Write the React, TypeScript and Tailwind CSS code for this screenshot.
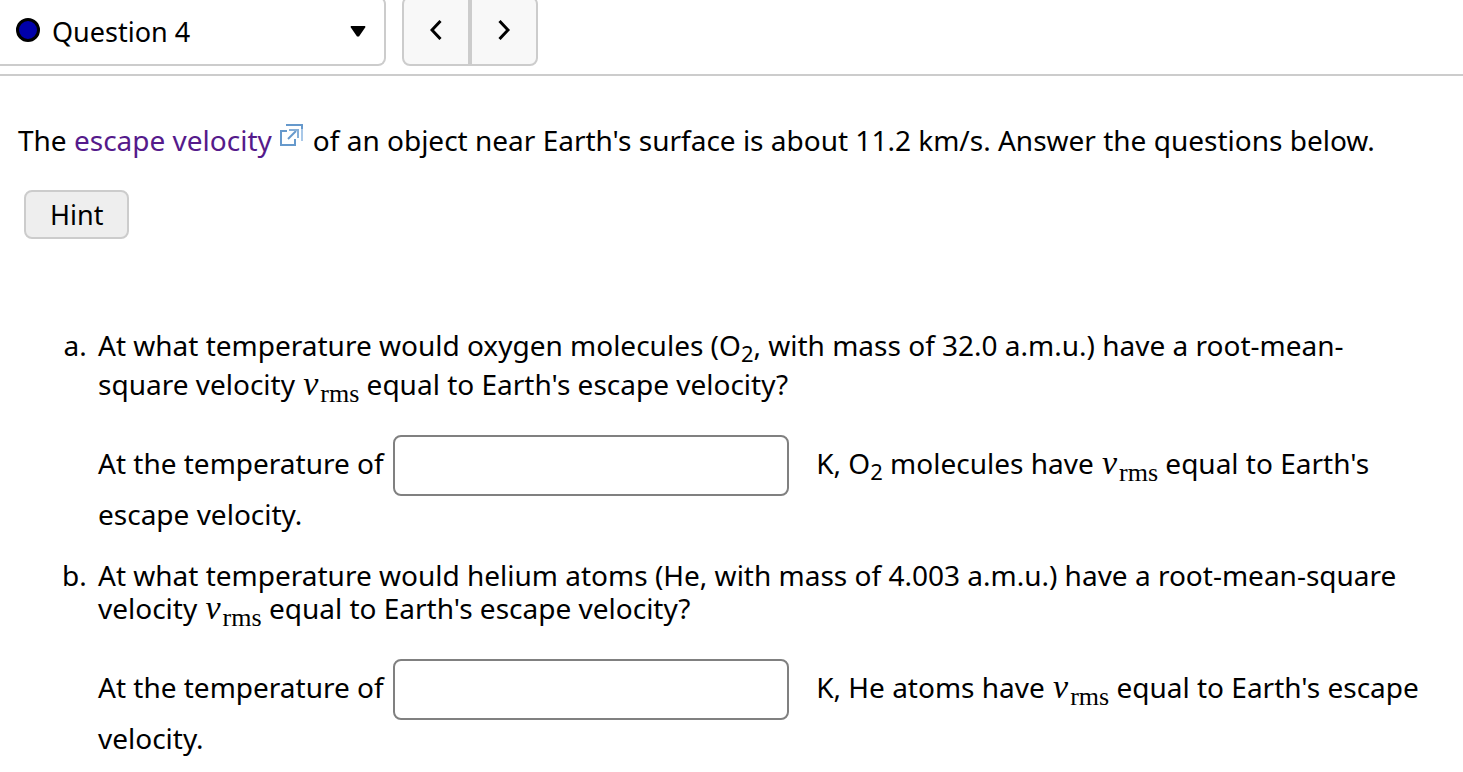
import React, { useId, useState } from 'react';

function Vrms() {
  return (
    <span className="whitespace-nowrap font-['Liberation_Serif',serif] leading-none">
      <i className="pr-0.5 pl-px text-[34px] leading-0">v</i>
      <sub className="text-[26px]">rms</sub>
    </span>
  );
}

function ExternalIcon() {
  return (
    <svg width="23" height="23" viewBox="0 0 23 23" fill="none" className="mr-[10px] mb-1 ml-2 inline-block align-baseline" aria-hidden="true">
      <path d="M22 3V17" stroke="#a9c8e8" strokeWidth="2" />
      <path d="M6 1H22V5" stroke="#6699cc" strokeWidth="2" />
      <path d="M7 7H1V21H15V15" stroke="#6699cc" strokeWidth="2" />
      <path d="M8 15L16 7" stroke="#6699cc" strokeWidth="2" />
      <path d="M9 6H18V14" stroke="#86afd8" strokeWidth="2" />
    </svg>
  );
}

interface AnswerProps {
  children: React.ReactNode;
  className: string;
}

function Answer({ children, className }: AnswerProps) {
  const id = useId();
  const [value, setValue] = useState('');

  return (
    <p className={className}>
      <label htmlFor={id}>At the temperature of</label>{' '}
      <input
        id={id}
        type="text"
        value={value}
        onChange={(e) => setValue(e.target.value)}
        className="mr-5 mb-[2px] ml-0.5 h-[61px] w-[396px] rounded-lg border-2 border-[#808080] bg-white px-3 align-middle"
      />{' '}
      {children}
    </p>
  );
}

export default function App() {
  const [question, setQuestion] = useState(4);

  return (
    <div className="overflow-hidden bg-white font-['Noto_Sans',sans-serif] text-[28px] leading-[33px] text-black">
      {/* Question navigation */}
      <header className="flex gap-4 border-b-2 border-[#cccccc] pb-2 text-[27px]">
        <div className="relative -mt-1 h-[70px] w-[386px]">
          <select
            aria-label="Question"
            value={question}
            onChange={(e) => setQuestion(Number(e.target.value))}
            className="h-full w-full appearance-none rounded-r-lg border-2 border-l-0 border-[#cccccc] bg-white pl-[52px]"
          >
            {[1, 2, 3, 4, 5, 6].map((n) => (
              <option key={n} value={n}>
                Question {n}
              </option>
            ))}
          </select>
          <span className="pointer-events-none absolute top-[22px] left-4 size-6 rounded-full border-[3px] border-black bg-[#0000aa]" />
          <svg width="16" height="11" viewBox="0 0 16 11" className="pointer-events-none absolute top-[30px] right-5" aria-hidden="true">
            <path d="M1 0H15L15.5 1L9 10.5H7L0.5 1Z" />
          </svg>
        </div>
        <nav className="-mt-1 flex h-[70px]">
          <button
            aria-label="Previous question"
            onClick={() => setQuestion(Math.max(1, question - 1))}
            className="flex w-[68px] items-center justify-center rounded-l-lg border-2 border-[#cccccc] bg-[#f8f8f8] pb-0.5"
          >
            <svg width="12" height="20" viewBox="0 0 12 20" fill="none" stroke="black" strokeWidth="3" aria-hidden="true">
              <path d="M10.5 1L2 10L10.5 19" />
            </svg>
          </button>
          <button
            aria-label="Next question"
            onClick={() => setQuestion(Math.min(6, question + 1))}
            className="flex w-[68px] items-center justify-center rounded-r-lg border-2 border-[#cccccc] bg-[#f8f8f8] pb-0.5"
          >
            <svg width="12" height="20" viewBox="0 0 12 20" fill="none" stroke="black" strokeWidth="3" aria-hidden="true">
              <path d="M1.5 1L10 10L1.5 19" />
            </svg>
          </button>
        </nav>
      </header>

      <main className="pt-12 pr-9 pb-4 pl-[18px]">
        <p>
          The{' '}
          <a href="#escape-velocity" className="text-[#551a8b]">
            escape velocity
            <ExternalIcon />
          </a>
          of an object near Earth's surface is about 11.2 km/s. Answer the questions below.
        </p>
        <button className="mt-[33px] ml-[6px] block h-[49px] rounded-lg border-2 border-[#cccccc] bg-[#eeeeee] px-6 text-[27px]">
          Hint
        </button>

        <ol className="mt-[87px] list-[lower-alpha] pl-[76px]">
          <li className="pl-1">
            <p className="leading-[39px]">
              At what temperature would oxygen molecules (O<sub className="text-[22px]">2</sub>, with mass of 32.0 a.m.u.) have a
              root-mean-square velocity <Vrms /> equal to Earth's escape velocity?
            </p>
            <Answer className="mt-[31px]">
              K, O<sub className="text-[22px]">2</sub> molecules have <Vrms /> equal to Earth's escape velocity.
            </Answer>
          </li>
          <li className="mt-7 pl-1">
            <p>
              At what temperature would helium atoms (He, with mass of 4.003 a.m.u.) have a root-mean-square velocity <Vrms /> equal
              to Earth's escape velocity?
            </p>
            <Answer className="mt-[34px]">
              K, He atoms have <Vrms /> equal to Earth's escape velocity.
            </Answer>
          </li>
        </ol>
      </main>
    </div>
  );
}
